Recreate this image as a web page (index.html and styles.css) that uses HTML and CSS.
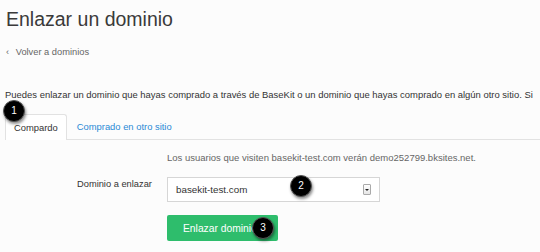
FILE: index.html
```html
<!DOCTYPE html>
<html lang="es">
<head>
<meta charset="utf-8">
<title>Enlazar un dominio</title>
<link rel="stylesheet" href="styles.css">
</head>
<body>
<div class="page">
  <h1 class="title">Enlazar un dominio</h1>
  <a class="back" href="#"><span class="chev">‹</span> Volver a dominios</a>
  <p class="intro">Puedes enlazar un dominio que hayas comprado a través de BaseKit o un dominio que hayas comprado en algún otro sitio. Si</p>
  <div class="tabs">
    <div class="tab active">Compardo<span class="badge b1">1</span></div>
    <div class="tab link">Comprado en otro sitio</div>
    <div class="tab-fill"></div>
  </div>
  <div class="form">
    <p class="note">Los usuarios que visiten basekit-test.com verán demo252799.bksites.net.</p>
    <div class="row">
      <label class="label">Dominio a enlazar</label>
      <div class="select">
        <span class="value">basekit-test.com</span>
        <span class="arrow"></span>
        <span class="badge b2">2</span>
      </div>
    </div>
    <div class="row">
      <span class="label"></span>
      <button class="btn">Enlazar dominio<span class="badge b3">3</span></button>
    </div>
  </div>
</div>
</body>
</html>
```
FILE: styles.css
```css
html, body {
  margin: 0;
  padding: 0;
  background: #fcfcfc;
}
body {
  font-family: "Liberation Sans", Arial, sans-serif;
  color: #333;
  width: 540px;
  height: 252px;
  overflow: hidden;
}
.page {
  padding: 6px 0 0 6px;
}
.title {
  margin: 0;
  font-size: 19.5px;
  font-weight: normal;
  color: #3a3a3a;
  line-height: 26px;
}
.back {
  display: block;
  margin-top: 13px;
  font-size: 9.3px;
  color: #666;
  text-decoration: none;
  line-height: 14px;
}
.chev {
  margin-right: 4px;
}
.intro {
  margin: 29px 0 0 -1px;
  font-size: 9.45px;
  white-space: nowrap;
  line-height: 14px;
  color: #333;
}
.tabs {
  display: flex;
  margin-top: 12px;
  margin-left: -1px;
  height: 26px;
}
.tab {
  position: relative;
  padding: 0 8px;
  font-size: 9.4px;
  line-height: 25px;
}
.tab.active {
  border: 1px solid #e2e2e2;
  border-bottom: none;
  border-radius: 3px 3px 0 0;
  background: #fff;
  color: #333;
}
.tab.link {
  color: #2b8ad6;
  border-bottom: 1px solid #e2e2e2;
  padding: 0 9px 0 10px;
}
.tab-fill {
  flex: 1;
  border-bottom: 1px solid #e2e2e2;
}
.form {
  padding-left: 161px;
  margin-top: 11px;
}
.note {
  margin: 0;
  font-size: 9.5px;
  color: #666;
  line-height: 14px;
}
.row {
  display: flex;
  align-items: center;
  margin-top: 0;
}
.label {
  font-size: 9.3px;
  color: #333;
  margin-left: -90px;
  width: 90px;
}
.select {
  position: relative;
  margin-top: 12px;
  box-sizing: border-box;
  width: 213px;
  height: 25px;
  border: 1px solid #d6d6d6;
  background: #fff;
  display: flex;
  align-items: center;
  padding: 0 8px;
  font-size: 9.8px;
  color: #333;
}
.value {
  flex: 1;
}
.arrow {
  width: 6px;
  height: 9px;
  border: 1px solid #aaa;
  border-radius: 1px;
  background: linear-gradient(#fff, #e6e6e6);
  position: relative;
}
.arrow::after {
  content: "";
  position: absolute;
  left: 1px;
  top: 4px;
  border-left: 2px solid transparent;
  border-right: 2px solid transparent;
  border-top: 2px solid #222;
}
.btn {
  position: relative;
  margin-top: 13px;
  height: 26px;
  width: 111px;
  padding: 0 0 0 16px;
  text-align: left;
  border: none;
  border-radius: 2px;
  background: #2ebd6c;
  color: #fff;
  font-family: "Liberation Sans", Arial, sans-serif;
  font-size: 10.3px;
}
.badge {
  position: absolute;
  width: 22px;
  height: 22px;
  border-radius: 50%;
  background: #000;
  border: 1px solid #555;
  box-sizing: border-box;
  color: #fff;
  font-size: 10px;
  line-height: 20px;
  text-align: center;
  box-shadow: 1px 2px 3px rgba(0, 0, 0, 0.45);
}
.b1 {
  left: -3px;
  top: -15px;
}
.b2 {
  left: 122px;
  top: -3px;
}
.b3 {
  left: 85px;
  top: 2px;
}
```
